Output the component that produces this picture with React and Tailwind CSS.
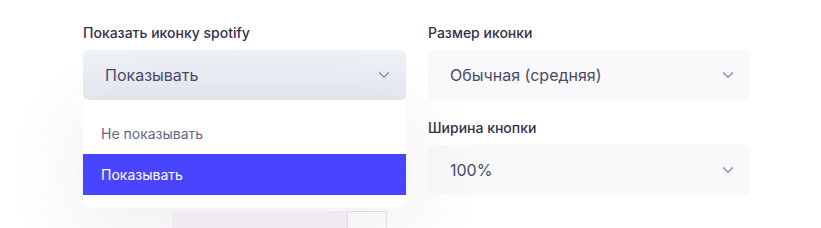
import React from "react";

const Chevron = () => (
  <svg width="12" height="8" viewBox="0 0 12 8" fill="none" className="shrink-0">
    <path d="M1.5 1.8 6 6.2l4.5-4.4" stroke="#8e8ea9" strokeWidth="1.4" strokeLinecap="round" strokeLinejoin="round" />
  </svg>
);

const Field = ({ label, value, active, children }) => (
  <div className="flex flex-col">
    <label className="text-[14px] leading-5 font-medium text-[#32324d] mb-[7px]">{label}</label>
    <div className="relative">
      <button
        className={
          active
            ? "w-full h-[50px] flex items-center justify-between pl-[22px] pr-[16px] rounded-md bg-gradient-to-b from-[#eef1f6] to-[#e6e9f0] text-[16px] text-[#4a4a6a]"
            : "w-full h-[50px] flex items-center justify-between pl-[22px] pr-[16px] rounded-md bg-[#f9f9fb] text-[16px] text-[#4a4a6a]"
        }
      >
        <span>{value}</span>
        <Chevron />
      </button>
      {children}
    </div>
  </div>
);

export default function App() {
  return (
    <div className="w-[821px] h-[228px] bg-white overflow-hidden" style={{ fontFamily: "Inter, 'Noto Sans', sans-serif" }}>
      <div className="grid grid-cols-[323px_322px] gap-x-[22px] pl-[83px] pt-[23px]">
        <div className="flex flex-col">
          <Field label="Показать иконку spotify" value="Показывать" active>
            <div className="absolute left-0 right-0 top-[50px] z-10 bg-white rounded-md py-[13px] shadow-[0_18px_80px_rgba(110,70,110,0.11)]">
              <div className="h-[41px] flex items-center px-[18px] text-[14px] text-[#666687]">Не показывать</div>
              <div className="h-[41px] flex items-center px-[18px] text-[14px] text-white bg-[#4945ff]">Показывать</div>
            </div>
          </Field>
          <div className="flex mt-[111px] ml-[89px] h-[20px]">
            <div className="w-[175px] bg-[#f8f6f9]" />
            <div className="w-[40px] bg-white border border-[#e4e4ea]" />
          </div>
        </div>
        <div className="flex flex-col gap-[18px]">
          <Field label="Размер иконки" value="Обычная (средняя)" />
          <Field label="Ширина кнопки" value="100%" />
        </div>
      </div>
    </div>
  );
}
